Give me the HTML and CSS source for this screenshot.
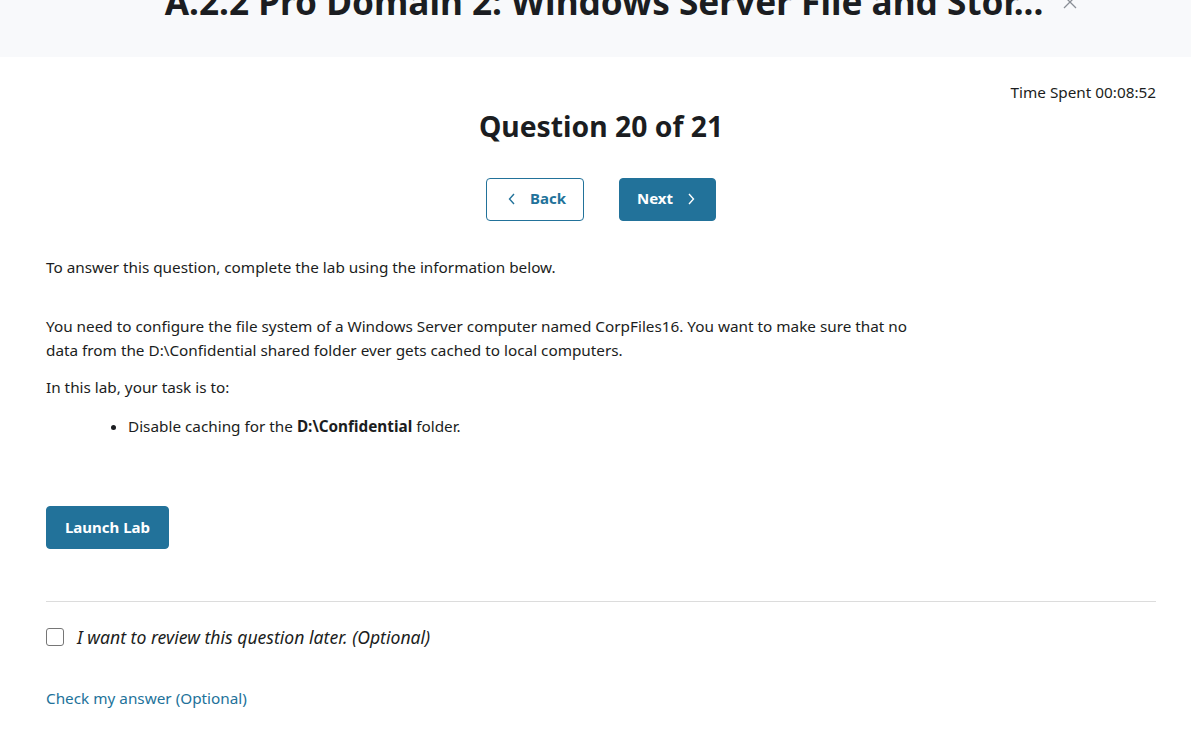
FILE: index.html
```html
<!DOCTYPE html>
<html lang="en">
<head>
<meta charset="utf-8">
<link rel="stylesheet" href="styles.css">
</head>
<body>
<header class="top">
  <div class="title-wrap">
    <h1 class="top-title">A.2.2 Pro Domain 2: Windows Server File and Stor...</h1>
    <span class="close" aria-label="Close">
      <svg width="14" height="14" viewBox="0 0 14 14"><path d="M1 1L13 13M13 1L1 13" stroke="#8a8f96" stroke-width="1.3" fill="none"/></svg>
    </span>
  </div>
</header>
<main class="page">
  <div class="timer">Time Spent 00:08:52</div>
  <h2 class="q-title">Question 20 of 21</h2>
  <div class="nav">
    <button class="btn btn-outline"><svg width="8" height="12" viewBox="0 0 8 12"><path d="M6 1L1.5 6L6 11" stroke="currentColor" stroke-width="1.4" fill="none"/></svg><span>Back</span></button>
    <button class="btn btn-fill"><span>Next</span><svg width="8" height="12" viewBox="0 0 8 12"><path d="M2 1L6.5 6L2 11" stroke="currentColor" stroke-width="1.4" fill="none"/></svg></button>
  </div>
  <p class="intro">To answer this question, complete the lab using the information below.</p>
  <div class="scenario">
    <p>You need to configure the file system of a Windows Server computer named CorpFiles16. You want to make sure that no data from the D:\Confidential shared folder ever gets cached to local computers.</p>
    <p>In this lab, your task is to:</p>
    <ul class="tasks">
      <li>Disable caching for the <b>D:\Confidential</b> folder.</li>
    </ul>
  </div>
  <button class="btn btn-fill launch">Launch Lab</button>
  <hr class="divider">
  <label class="review"><span class="box"></span><em>I want to review this question later. (Optional)</em></label>
  <a class="check" href="#">Check my answer (Optional)</a>
</main>
</body>
</html>
```
FILE: styles.css
```css
* { box-sizing: border-box; }
html, body { margin: 0; padding: 0; background: #fff; }
body {
  font-family: "Noto Sans", "Open Sans", sans-serif;
  color: #1b1d21;
  font-size: 15.3px;
  line-height: 24px;
  overflow: hidden;
}
.top {
  height: 57px;
  background: #f8f9fb;
  display: flex;
  justify-content: center;
  align-items: flex-start;
  padding-left: 17px;
  overflow: hidden;
}
.title-wrap { position: relative; }
.top-title {
  margin: -21px 0 0 0;
  font-size: 35.2px;
  line-height: 44px;
  font-weight: 700;
  color: #1b1d21;
  white-space: nowrap;
}
.close {
  position: absolute;
  left: calc(100% + 20px);
  top: -5px;
  display: flex;
}
.page {
  padding: 24px 35px 0 46px;
  display: flex;
  flex-direction: column;
}
.timer {
  align-self: flex-end;
  margin-top: -1px;
}
.q-title {
  margin: 4px 0 0 0;
  text-align: center;
  font-size: 28.3px;
  line-height: 36px;
  font-weight: 700;
}
.nav {
  display: flex;
  justify-content: center;
  gap: 35px;
  margin-top: 34px;
}
.btn {
  font-family: inherit;
  font-size: 15px;
  font-weight: 700;
  height: 43px;
  padding: 0 0 3px 0;
  border-radius: 4px;
  display: inline-flex;
  align-items: center;
  justify-content: center;
  gap: 14px;
  cursor: pointer;
}
.btn svg { margin-top: 2px; }
.btn-outline {
  width: 98px;
  padding-left: 4px;
  background: #fff;
  color: #22729a;
  border: 1px solid #22729a;
}
.btn-fill {
  width: 97px;
  background: #22729a;
  color: #fff;
  border: 1px solid #22729a;
}
.btn-fill span { margin-left: -3px; }
.intro { margin: 34px 0 0 0; }
.scenario { margin-top: 35px; max-width: 880px; }
.scenario p { margin: 0 0 13px 0; }
.tasks { margin: 15px 0 0 0; padding-left: 82px; }
.launch {
  align-self: flex-start;
  width: 123px;
  margin-top: 68px;
  padding-bottom: 2px;
}
.divider {
  width: 100%;
  border: 0;
  border-top: 1px solid #dcdcdc;
  margin: 52px 0 0 0;
}
.review {
  display: flex;
  align-items: center;
  gap: 13px;
  margin-top: 23px;
  font-size: 17.6px;
}
.box {
  width: 18px;
  height: 18px;
  border: 1.5px solid #767676;
  border-radius: 3px;
}
.review em { font-style: italic; }
.check {
  margin-top: 37px;
  color: #22729a;
  text-decoration: none;
}
```
